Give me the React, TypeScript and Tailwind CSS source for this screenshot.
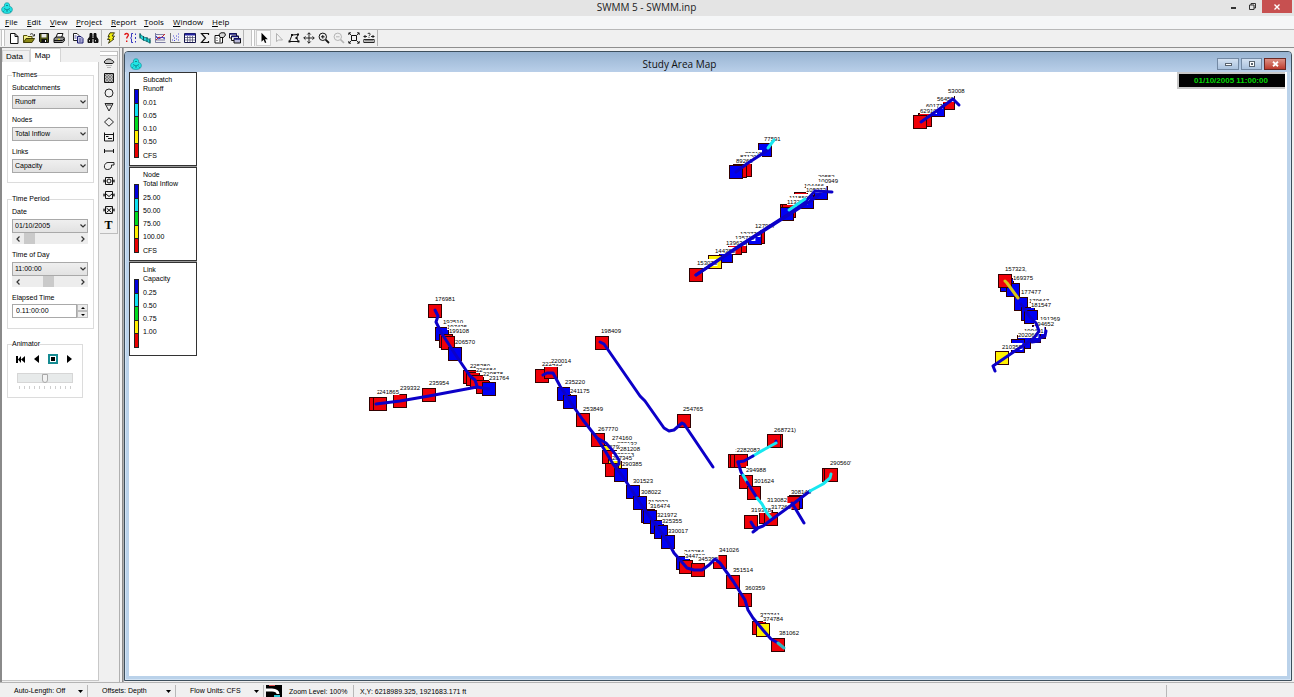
import { useState } from "react";
import type { ReactNode } from "react";
import clsx from "clsx";

const SANS = "font-['Liberation_Sans',Arial,sans-serif]";
const SEGOE = "font-['Open_Sans','Noto_Sans',sans-serif]";

const RED = "#f00008";
const BLUE = "#0000f4";
const YELLOW = "#fff000";
const CYAN = "#18e8f0";
const LINK = "#0c00c8";

/* ---------- icons ---------- */

function Icon({ children, size = 12 }: { children: ReactNode; size?: number }) {
  return (
    <svg width={size} height={size} viewBox="0 0 12 12" fill="none" stroke="#111" strokeWidth="1" className="shrink-0">
      {children}
    </svg>
  );
}

function AppIcon() {
  return (
    <Icon>
      <path d="M3.500 4.500C3 2 4 .8 6 .8S9 2 8.500 4.500C10.500 4.500 11.500 6 11.300 8C11 10.500 9 11.400 6 11.400S1 10.500.7 8C.5 6 1.500 4.500 3.500 4.500Z" fill="#20e4e4" stroke="#168f99" strokeWidth=".7" />
      <path d="M3 6.500 6 8 9 6.500M6 8v2M5 3.500h2" stroke="#0b7580" strokeWidth=".8" />
      <path d="M2 10 3.500 8.500M10 10 8.500 8.500" stroke="#0b7580" strokeWidth=".6" />
    </Icon>
  );
}

const fileTools = [
  {
    name: "New",
    icon: <path d="M2.500 1.500H7L10 4.500V11.500H2.500ZM7 1.500V4.500H10" fill="#fff" />,
  },
  {
    name: "Open",
    icon: (
      <>
        <path d="M.5 10.500V3.500H4L5 4.500H9V6" fill="#f5f08a" stroke="#54510a" />
        <path d="M.5 10.500 3 6.500H11.500L9 10.500Z" fill="#8b8816" stroke="#3d3b05" />
        <path d="M7 2.500C8.500 1 10 1.500 10.500 3.500M11.500 2v2H9.500" strokeWidth=".8" />
      </>
    ),
  },
  {
    name: "Save",
    icon: (
      <>
        <path d="M1.500 1.500H10.500V10.500H2.500L1.500 9.500Z" fill="#4d5312" />
        <path d="M3.500 2H8.500V5.500H3.500Z" fill="#e6e6e6" stroke="none" />
        <path d="M3.500 7H9V10.500H3.500Z" fill="#111" stroke="none" />
        <path d="M7 8h1v2H7z" fill="#eee" stroke="none" />
      </>
    ),
  },
  {
    name: "Print",
    icon: (
      <>
        <path d="M3 5.500 4.500 1.500H10L8.500 5.500" fill="#fff" />
        <path d="M1 6.500 3 5H10.500L11.300 6V9L9.500 10.500H1Z" fill="#8d8d8d" />
        <path d="M1 8.500H9.500L11 7" />
        <path d="M5 7.300h2" stroke="#e8e000" />
      </>
    ),
  },
];

const editTools = [
  {
    name: "Copy",
    icon: (
      <>
        <path d="M1.500 1.500H5L7 3.500V8.500H1.500Z" fill="#fff" stroke="#222" />
        <path d="M5.500 4.500H9L11 6.500V11H5.500Z" fill="#c8c8e8" stroke="#181870" />
        <path d="M2.500 4h2M2.500 6h2M7 7h2.500M7 9h2.500" stroke="#303080" strokeWidth=".9" />
      </>
    ),
  },
  {
    name: "Find",
    icon: (
      <>
        <path d="M3 1.500H5V5H3ZM7 1.500H9V5H7Z" fill="#111" />
        <path d="M1 10.500V7.500L3 4.500H5V10.500ZM7 10.500V4.500H9L11 7.500V10.500Z" fill="#111" />
        <path d="M5 6.500H7" />
        <path d="M2.500 8v1.500M8.500 8v1.500" stroke="#fff" strokeWidth=".8" />
      </>
    ),
  },
];

const runTools = [
  {
    name: "Run",
    icon: <path d="M5 .8H9.500L7 4H9.500L7.500 7H9L3.500 11.300 5 7.500H2.500L4.500 4.500H3Z" fill="#f2ee10" stroke="#33310a" strokeWidth=".9" />,
  },
];

const reportTools = [
  {
    name: "Query",
    icon: (
      <>
        <path d="M.8 3C1 .8 4.500 1 4.300 3.200C4.200 4.500 2.700 4.800 2.700 6.500M2.700 8.500V10" stroke="#e01818" strokeWidth="1.400" />
        <path d="M9 1.500H7.500V5L6.500 6 7.500 7V10.500H9M11.500 1.500V3M11.500 5V7M11.500 9V10.500" stroke="#2020b8" strokeWidth=".9" />
      </>
    ),
  },
  {
    name: "Profile Plot",
    icon: (
      <>
        <path d="M1 2 4.500 5 8 6 11 8V11L7 9 4 8 1 5.500Z" fill="#22d8d8" stroke="#0b7375" strokeWidth=".8" />
        <path d="M1 1V6.500M4.500 4V8.500M8 5V10M11 6V11.500" stroke="#0a4a55" strokeWidth=".9" />
      </>
    ),
  },
  {
    name: "Time Series Plot",
    icon: (
      <>
        <path d="M1.500 1V10.500H11.500M2 2.500H11M2 5.500H11M2 8H11" stroke="#4d4d83" strokeWidth=".7" />
        <path d="M2 8 5 5 7 6 11 2" stroke="#d02525" />
        <path d="M2 4 4.500 7 8 5 11 7" stroke="#3535d0" />
      </>
    ),
  },
  {
    name: "Scatter Plot",
    icon: (
      <>
        <path d="M1.500 1V10.500H11.500" stroke="#555" strokeWidth=".8" />
        <path d="M3 8h1M5 6h1M4 4h1M7 7h1M7 4h1M9 5h1M9 2h1M5 8.500h1M9 8h1" stroke="#4848d8" />
      </>
    ),
  },
  {
    name: "Table",
    icon: (
      <>
        <path d="M.5 1.500H11.500V10.500H.5Z" fill="#fff" stroke="#15154a" />
        <path d="M1 2.500H11" stroke="#2424a0" strokeWidth="2" />
        <path d="M1 5.500H11M1 8H11M3.500 4V10M6 4V10M8.500 4V10" stroke="#454567" strokeWidth=".7" />
      </>
    ),
  },
  {
    name: "Statistics",
    icon: <path d="M9.500 3V1.500H2.500L6.500 6 2.500 10.500H9.500V9" strokeWidth="1.200" />,
  },
  {
    name: "Properties",
    icon: (
      <>
        <path d="M1 3.500H8.500V11H1Z" fill="#fff" />
        <path d="M5 2.500 7 .8H10.500L11.500 3 9.500 5.500H6Z" fill="#d7d7d7" />
        <path d="M2.500 6h1M5 7h2M2.500 8.500h1M5 9h2" stroke="#222" />
      </>
    ),
  },
  {
    name: "Cascade Windows",
    icon: (
      <>
        <path d="M.5 1.500H7.500V6H.5Z" fill="#fff" />
        <path d="M.5 2H7.500" stroke="#15157a" strokeWidth="1.500" />
        <path d="M2.500 4H9.500V8.500H2.500Z" fill="#fff" />
        <path d="M2.500 4.500H9.500" stroke="#15157a" strokeWidth="1.500" />
        <path d="M5 6.500H11.500V11H5Z" fill="#b8b8d8" />
        <path d="M5 7H11.500" stroke="#15157a" strokeWidth="1.500" />
      </>
    ),
  },
];

const mapTools = [
  {
    name: "Select Object",
    icon: <path d="M3.500 .8V9.800L5.600 7.800 7 11 8.300 10.400 7 7.300H9.800Z" fill="#000" stroke="none" />,
  },
  {
    name: "Select Vertex",
    icon: <path d="M3.500 1.500V9.500L5.500 8H9.500Z" fill="#f4f4f4" stroke="#aaa" strokeWidth=".9" />,
  },
  {
    name: "Select Region",
    icon: (
      <>
        <path d="M4 3 10 2.500 8.500 6 10.500 9.500H1.500Z" />
        <path d="M3 2h2v2H3zM9 1.500h2v2H9zM7.500 5h2v2h-2zM.5 8.500h2v2h-2zM9.500 8.500h2v2h-2z" fill="#111" stroke="none" />
      </>
    ),
  },
  {
    name: "Pan",
    icon: <path d="M6 .8V11.200M.8 6H11.200M4.300 2.500 6 .8 7.700 2.500M4.300 9.500 6 11.200 7.700 9.500M2.500 4.300.8 6 2.500 7.700M9.500 4.300 11.200 6 9.500 7.700" strokeWidth=".9" />,
  },
  {
    name: "Zoom In",
    icon: (
      <>
        <circle cx="4.800" cy="4.800" r="3.700" />
        <path d="M3 4.800H6.600M4.800 3V6.600" />
        <path d="M7.600 7.600 11 11" strokeWidth="1.800" />
      </>
    ),
  },
  {
    name: "Zoom Out",
    icon: (
      <>
        <circle cx="4.800" cy="4.800" r="3.700" stroke="#b4b4b4" />
        <path d="M3 4.800H6.600" stroke="#b4b4b4" />
        <path d="M7.600 7.600 11 11" strokeWidth="1.600" stroke="#b4b4b4" />
      </>
    ),
  },
  {
    name: "Full Extent",
    icon: (
      <>
        <path d="M3.500 3.500H8.500V8.500H3.500Z" />
        <path d="M.8 3V.8H3M9 .8H11.200V3M11.200 9V11.200H9M3 11.200H.8V9M1 1 3.500 3.500M11 1 8.500 3.500M11 11 8.500 8.500M1 11 3.500 8.500" strokeWidth=".9" />
      </>
    ),
  },
  {
    name: "Measure",
    icon: (
      <>
        <path d="M.8 7.500H11.200V10.500H.8ZM3 8V9.500M5 8V9.500M7 8V9.500M9 8V9.500" strokeWidth=".9" />
        <path d="M.8 4.500H4M8 4.500H11.200M2.500 3 1 4.500 2.500 6M9.500 3 11 4.500 9.500 6M4.800 2C5 .8 7.200 .8 7.200 2.200C7.200 3.200 6 3 6 4.200M6 5.200V6" strokeWidth=".9" />
      </>
    ),
  },
];

const objectTools = [
  {
    name: "Rain Gage",
    icon: (
      <>
        <path d="M3 6.500C1 6.500 .8 4 2.500 3.500C3.500 1.500 8 1.500 9 3.500C11.500 4 11 6.500 9 6.500Z" fill="#c4c4c4" />
        <path d="M4 8v1M6 8v1M8 8v1M5 10v1M7 10v1" stroke="#555" strokeWidth=".8" />
      </>
    ),
  },
  {
    name: "Subcatchment",
    icon: (
      <>
        <path d="M1.500 1.500H10.500V10.500H1.500Z" fill="#b9b9b9" />
        <path d="M2 4 4 2M2 7 7 2M2 10 10 2M5 10 10 5M8 10 10 8M4 2 10 8M2 3 9 10M2 6 6 10M7 2 10 5" stroke="#555" strokeWidth=".5" />
      </>
    ),
  },
  { name: "Junction", icon: <circle cx="6" cy="6" r="4" strokeWidth=".9" /> },
  { name: "Outfall", icon: <path d="M2 2.500H10L6 10ZM3.500 4H8.500" strokeWidth=".9" /> },
  { name: "Divider", icon: <path d="M6 1.800 10.500 6 6 10.200 1.500 6Z" strokeWidth=".9" /> },
  { name: "Storage Unit", icon: <path d="M1.500 1.500V10H10.500V1.500M1.500 3.500H10.500M3 5.500H5.500M5 7.500H9" /> },
  { name: "Conduit", icon: <path d="M1.500 4V8M10.500 4V8M1.500 6H10.500" /> },
  { name: "Pump", icon: <path d="M11 2.500V5H8.500C9 8 7 9.500 4.500 9.500S1 8 1.500 5.500C2 3.500 3.500 2.500 5 2.500Z" strokeWidth=".9" /> },
  {
    name: "Orifice",
    icon: (
      <>
        <path d="M2.500 2.500H9.500V9.500H2.500ZM.5 6H2.500M9.500 6H11.500M1 4.500V7.500M11 4.500V7.500" />
        <circle cx="6" cy="6" r="2" />
      </>
    ),
  },
  { name: "Weir", icon: <path d="M2.500 2.500H9.500V9.500H2.500ZM.5 6H2.500M9.500 6H11.500M1 4.500V7.500M11 4.500V7.500M3 5 6 7.500 9 5" /> },
  { name: "Outlet", icon: <path d="M2.500 2.500H9.500V9.500H2.500ZM.5 6H2.500M9.500 6H11.500M1 4.500V7.500M11 4.500V7.500M3.500 4 8.500 8.500M8.500 4 3.500 8.500" /> },
];

/* ---------- map data ---------- */

type Square = [number, number, string];

const squares: Square[] = [
  [948, 103, RED],
  [938, 110, BLUE],
  [925, 120, RED],
  [920, 122, RED],
  [765, 150, BLUE],
  [745, 170, RED],
  [740, 171, RED],
  [736, 172, BLUE],
  [801, 199, RED],
  [821, 193, BLUE],
  [807, 202, BLUE],
  [787, 211, RED],
  [789, 211, RED],
  [787, 214, BLUE],
  [758, 237, RED],
  [755, 238, BLUE],
  [740, 246, RED],
  [735, 248, RED],
  [726, 256, BLUE],
  [715, 262, YELLOW],
  [696, 275, RED],
  [1007, 285, BLUE],
  [1013, 290, BLUE],
  [1005, 281, RED],
  [1021, 304, BLUE],
  [1028, 314, BLUE],
  [1031, 317, BLUE],
  [1039, 332, BLUE],
  [1034, 336, BLUE],
  [1024, 342, BLUE],
  [1018, 346, BLUE],
  [1002, 358, YELLOW],
  [435, 311, RED],
  [442, 334, BLUE],
  [446, 341, RED],
  [448, 343, RED],
  [455, 354, BLUE],
  [470, 377, RED],
  [473, 379, RED],
  [477, 382, RED],
  [483, 387, RED],
  [489, 389, BLUE],
  [376, 404, RED],
  [380, 404, RED],
  [400, 401, RED],
  [429, 395, RED],
  [602, 343, RED],
  [684, 421, RED],
  [542, 376, RED],
  [551, 372, RED],
  [564, 394, BLUE],
  [570, 402, BLUE],
  [583, 420, RED],
  [598, 440, RED],
  [610, 452, YELLOW],
  [609, 457, RED],
  [615, 466, YELLOW],
  [612, 470, RED],
  [621, 475, BLUE],
  [633, 492, BLUE],
  [640, 503, BLUE],
  [648, 516, BLUE],
  [650, 517, BLUE],
  [657, 527, BLUE],
  [661, 532, BLUE],
  [668, 542, BLUE],
  [683, 563, BLUE],
  [686, 567, RED],
  [698, 570, RED],
  [720, 562, RED],
  [733, 582, RED],
  [745, 600, RED],
  [759, 628, RED],
  [763, 630, YELLOW],
  [778, 645, RED],
  [776, 441, RED],
  [774, 441, RED],
  [735, 461, RED],
  [737, 461, RED],
  [741, 461, RED],
  [746, 482, RED],
  [754, 493, RED],
  [796, 502, BLUE],
  [793, 503, RED],
  [829, 475, RED],
  [831, 475, RED],
  [751, 522, RED],
  [766, 517, RED],
  [771, 519, RED],
];

// Label text, left edge, vertical centre. Later labels overlay earlier ones.
type Label = [string, number, number];

const labels: Label[] = [
  ["53008", 948, 91],
  ["60177", 926, 106],
  ["56450", 937, 99],
  ["62910", 920, 111],
  ["77591", 764, 139],
  ["85310", 745, 154],
  ["87120", 740, 157],
  ["89263", 736, 161],
  ["20552", 818, 177],
  ["100949", 818, 181],
  ["104466", 804, 186],
  ["105373", 806, 190],
  ["111850", 789, 198],
  ["113270", 787, 202],
  ["127907", 755, 226],
  ["132770", 740, 234],
  ["135717", 735, 238],
  ["139630", 726, 243],
  ["144385", 715, 251],
  ["153076", 697, 263],
  ["157323,", 1005, 269],
  ["169375", 1013, 278],
  ["177477", 1021, 292],
  ["179647", 1029, 301],
  ["181547", 1031, 305],
  ["191369", 1040, 319],
  ["194652", 1034, 324],
  ["199411", 1024, 331],
  ["202060", 1018, 335],
  ["210355", 1002, 347],
  ["176981", 435, 299],
  ["192510", 443, 322],
  ["197435", 447, 327],
  ["199108", 449, 331],
  ["206570", 455, 342],
  ["225380", 470, 366],
  ["226684", 476, 370],
  ["229878", 483, 374],
  ["231764", 489, 378],
  ["241865", 377, 392],
  ["241865", 379, 392],
  ["239332", 400, 388],
  ["235954", 429, 383],
  ["198409", 601, 331],
  ["254765", 683, 409],
  ["222435", 542, 364],
  ["220014", 551, 361],
  ["235220", 565, 382],
  ["241175", 570, 391],
  ["253849", 583, 409],
  ["267770", 598, 429],
  ["278132", 617, 444],
  ["274160", 612, 438],
  ["279281", 609, 447],
  ["281208", 620, 449],
  ["285068", 614, 455],
  ["287345", 612, 458],
  ["290385", 622, 464],
  ["301523", 633, 481],
  ["308022", 641, 492],
  ["313032", 648, 502],
  ["316474", 650, 506],
  ["321972", 657, 515],
  ["325355", 662, 521],
  ["330017", 668, 531],
  ["343284", 684, 552],
  ["344762", 685, 556],
  ["345393", 698, 559],
  ["341026", 719, 550],
  ["351514", 733, 570],
  ["360359", 745, 588],
  ["373741", 760, 615],
  ["374784", 763, 619],
  ["381062", 779, 633],
  ["268721)", 774, 430],
  [":2282083", 735, 450],
  ["294988", 746, 470],
  ["301624", 754, 481],
  ["308148", 791, 492],
  ["319378", 751, 510],
  ["317260", 771, 507],
  ["313082", 767, 500],
  ["290560'", 830, 463],
];

const links: [string, string][] = [
  ["921,122 938,110 953,99 959,105", LINK],
  ["736,172 748,163 768,150", LINK],
  ["768,148 774,140", CYAN],
  ["696,275 733,250 742,244 787,215 805,202 815,191 832,192", LINK],
  ["696,275 740,246 787,216 812,200 820,194", LINK],
  ["789,210 805,199", CYAN],
  ["1005,281 1007,283 1018,298", "#d8c818"],
  ["1021,304 1030,317 1036,323 1039,331 1034,338 1024,345 1018,349 993,366 995,371", LINK],
  ["1046,331 1045,336 1040,338 1039,341 1032,342", LINK],
  ["435,310 438,316 436,322 442,334 448,343 455,354 470,376 475,380 477,386", LINK],
  ["376,404 400,401 429,396 477,387 489,389", LINK],
  ["600,342 604,344 640,396 645,401 664,428 669,431 674,430 682,423 684,424 713,467", LINK],
  ["543,375 547,373 553,373 560,386 571,403 583,420 597,438 604,449 613,464 621,474 633,492 640,503 650,517 661,532 668,542 674,553 681,561 687,568 694,570 702,570 709,565 715,559 720,563 733,581 745,600 748,610 753,618 763,630 771,639 778,643", LINK],
  ["597,438 606,443 613,451 619,460 619,464 616,466", LINK],
  ["776,443 776,441", LINK],
  ["753,456 765,449 776,443", CYAN],
  ["738,462 744,461 753,456", LINK],
  ["738,462 741,472 745,479", LINK],
  ["743,475 747,482", CYAN],
  ["747,482 757,498", LINK],
  ["757,498 762,504 767,513 771,518", CYAN],
  ["751,522 754,527 757,529 753,532", LINK],
  ["755,529 763,526 771,520 793,504 810,491", LINK],
  ["792,503 804,523", LINK],
  ["810,491 823,484 830,478 831,474", CYAN],
  ["778,643 784,648", "#30b8c0"],
];

function StudyMap() {
  return (
    <svg viewBox="129 72 1158 604" className="block h-full w-full" role="img" aria-label="Study Area Map">
      {squares.map(([x, y, fill], i) => (
        <rect key={i} x={x - 6.5} y={y - 6.5} width="13" height="13" fill={fill} stroke="#300" strokeWidth="1" />
      ))}
      {labels.map(([text, x, y], i) => (
        <g key={i}>
          <rect x={x} y={y - 4} width={text.length * 3.4} height="7" fill="#fff" />
          <text x={x} y={y + 2} className={clsx("text-[6px]", SANS)} fill="#000">
            {text}
          </text>
        </g>
      ))}
      {links.map(([points, color], i) => (
        <polyline key={i} points={points} fill="none" stroke={color} strokeWidth="3" strokeLinejoin="round" strokeLinecap="round" />
      ))}
    </svg>
  );
}

/* ---------- chrome ---------- */

function Grip() {
  return <div className="mx-px h-4 w-1 border-x border-[#c4c4c4] bg-white" />;
}

function ToolGroup({ tools, active }: { tools: { name: string; icon: ReactNode }[]; active?: string }) {
  return (
    <div className="flex">
      {tools.map((t) => (
        <button
          key={t.name}
          type="button"
          aria-label={t.name}
          className={clsx(
            "flex h-[16px] w-[15px] items-center justify-center",
            active === t.name && "border border-[#d0d0d0] bg-[#fafafa]"
          )}
        >
          <Icon>{t.icon}</Icon>
        </button>
      ))}
    </div>
  );
}

function Divider() {
  return <div className="mx-px h-[16px] w-px bg-[#b4b4b4]" />;
}

function SelectField({ label, value }: { label: string; value: string }) {
  return (
    <label className="flex flex-col gap-[2px]">
      <span className="leading-[10px]">{label}</span>
      <span className="relative block">
        <select className="block h-[14px] w-full appearance-none border border-[#a9a9a9] bg-gradient-to-b from-[#efefef] to-[#e2e2e2] pl-[2px] leading-[12px] outline-none">
          <option>{value}</option>
        </select>
        <svg width="6" height="4" viewBox="0 0 6 4" className="pointer-events-none absolute top-[5px] right-[2px]" fill="none" stroke="#333" strokeWidth="1.200">
          <path d="M.5 .5 3 3 5.500 .5" />
        </svg>
      </span>
    </label>
  );
}

function ScrollBar({ label, thumb }: { label: string; thumb: string }) {
  return (
    <div className="flex h-[11px] items-stretch bg-[#ededed]">
      <button type="button" aria-label={`${label} back`} className="flex w-[11px] items-center justify-center">
        <svg width="4" height="6" viewBox="0 0 4 6" fill="none" stroke="#333" strokeWidth="1.200"><path d="M3.500 .5 1 3 3.500 5.500" /></svg>
      </button>
      <div className="flex-1">
        <div className={clsx("h-full w-[11px] bg-[#cacaca]", thumb)} />
      </div>
      <button type="button" aria-label={`${label} forward`} className="flex w-[11px] items-center justify-center">
        <svg width="4" height="6" viewBox="0 0 4 6" fill="none" stroke="#333" strokeWidth="1.200"><path d="M.5 .5 3 3 .5 5.500" /></svg>
      </button>
    </div>
  );
}

function Sidebar() {
  const [speed, setSpeed] = useState(50);

  return (
    <aside className="flex w-[99px] shrink-0 flex-col border-l-2 border-[#8a8a8a] bg-[#f0f0f0] pb-px text-[7px] text-black">
      <div role="tablist" className="flex h-[14px] items-end text-[8px]">
        <button type="button" role="tab" aria-selected="false" className="h-[12px] w-[28px] border border-b-0 border-[#d5d5d5] pr-[3px] leading-[12px]">
          Data
        </button>
        <button type="button" role="tab" aria-selected="true" className="h-[14px] w-[31px] border border-b-0 border-[#d5d5d5] bg-white pr-[6px] leading-[13px]">
          Map
        </button>
      </div>

      <div className="flex-1 border-r border-b border-[#c8c8c8] bg-white pt-[8px] pr-[4px] pl-[5px]">
        <fieldset className="border border-[#dcdcdc] pr-[5px] pb-[9px] pl-[4px]">
          <legend className="leading-[10px]">Themes</legend>
          <div className="flex flex-col gap-[6px] pt-[3px]">
            <SelectField label="Subcatchments" value="Runoff" />
            <SelectField label="Nodes" value="Total Inflow" />
            <SelectField label="Links" value="Capacity" />
          </div>
        </fieldset>

        <fieldset className="mt-[11px] border border-[#dcdcdc] pr-[5px] pb-[10px] pl-[4px]">
          <legend className="leading-[10px]">Time Period</legend>
          <div className="flex flex-col gap-[6px] pt-[3px]">
            <div>
              <SelectField label="Date" value="01/10/2005" />
              <ScrollBar label="Date" thumb="ml-px" />
            </div>
            <div>
              <SelectField label="Time of Day" value="11:00:00" />
              <ScrollBar label="Time of day" thumb="ml-[20px]" />
            </div>
            <div>
              <label htmlFor="elapsed" className="block pb-px leading-[10px]">Elapsed Time</label>
              <div className="flex h-[14px]">
                <input id="elapsed" defaultValue="0.11:00:00" className="w-0 flex-1 border border-[#a9a9a9] bg-white pl-[3px] outline-none" />
                <div className="flex w-[11px] flex-col">
                  <button type="button" aria-label="Increase" className="flex flex-1 items-center justify-center border border-[#bdbdbd] bg-[#ececec]">
                    <svg width="4" height="2" viewBox="0 0 4 2"><path d="M0 2 2 0 4 2Z" /></svg>
                  </button>
                  <button type="button" aria-label="Decrease" className="flex flex-1 items-center justify-center border border-[#bdbdbd] bg-[#ececec]">
                    <svg width="4" height="2" viewBox="0 0 4 2"><path d="M0 0 2 2 4 0Z" /></svg>
                  </button>
                </div>
              </div>
            </div>
          </div>
        </fieldset>

        <fieldset className="mt-[10px] w-[76px] border border-[#dcdcdc] px-[4px] pb-[8px]">
          <legend className="leading-[10px]">Animator</legend>
          <div className="flex h-[20px] items-center justify-between pr-[6px] pl-[4px]">
            <button type="button" aria-label="Rewind"><svg width="9" height="7" viewBox="0 0 9 7"><path d="M0 0H2V7H0ZM5 0V7L2 3.500ZM9 0V7L5 3.500Z" /></svg></button>
            <button type="button" aria-label="Play backward"><svg width="5" height="8" viewBox="0 0 5 8"><path d="M5 0V8L0 4Z" /></svg></button>
            <button type="button" aria-label="Stop" className="flex size-[10px] items-center justify-center border-2 border-[#168b92] bg-white">
              <span className="size-1 bg-black" />
            </button>
            <button type="button" aria-label="Play forward"><svg width="5" height="8" viewBox="0 0 5 8"><path d="M0 0V8L5 4Z" /></svg></button>
          </div>
          <input
            type="range"
            aria-label="Animation speed"
            value={speed}
            onChange={(e) => setSpeed(Number(e.target.value))}
            className="mx-auto mt-[4px] block h-[10px] w-[56px] appearance-none border border-[#d6d6d6] bg-[#e7eaea] [&::-webkit-slider-thumb]:h-[9px] [&::-webkit-slider-thumb]:w-[6px] [&::-webkit-slider-thumb]:appearance-none [&::-webkit-slider-thumb]:rounded-b-full [&::-webkit-slider-thumb]:border [&::-webkit-slider-thumb]:border-[#a8a8a8] [&::-webkit-slider-thumb]:bg-[#f2f2f2]"
          />
          <div className="mx-auto mt-[3px] flex w-[52px] justify-between">
            {Array.from({ length: 11 }, (_, i) => (
              <span key={i} className="h-[3px] w-px bg-[#cfcfcf]" />
            ))}
          </div>
        </fieldset>
      </div>
    </aside>
  );
}

function ObjectToolbar() {
  return (
    <div className="w-[20px] shrink-0 bg-[#f0f0f0] px-px pt-[3px]">
      <div className="flex h-[183px] flex-col border-r border-b border-[#bdbdbd] pb-px">
        <div className="h-[5px] border-y border-[#c4c4c4] bg-white" />
        {objectTools.map((t) => (
          <button key={t.name} type="button" aria-label={t.name} className="flex min-h-0 flex-1 items-center justify-center">
            <Icon>{t.icon}</Icon>
          </button>
        ))}
        <button type="button" aria-label="Label" className="flex min-h-0 flex-1 items-center justify-center font-['Liberation_Serif',serif] text-[12px] leading-none font-bold">
          T
        </button>
      </div>
    </div>
  );
}

const legendColors = ["bg-[#0000dc]", "bg-[#10e0f0]", "bg-[#00dc20]", "bg-[#fff000]", "bg-[#e80000]"];

function Legend({ title, theme, values, unit }: { title: string; theme: string; values: string[]; unit?: string }) {
  return (
    <section className="h-[94px] border border-[#333] bg-white pt-[2px] pl-[4px] text-[7px] text-black">
      <div className="pl-[9px] leading-[9px]">
        <p>{title}</p>
        <p>{theme}</p>
      </div>
      <div className="flex -mt-[4px] gap-[4px]">
        <div className="flex h-[69px] w-[5px] flex-col border border-[#222]">
          {legendColors.map((c) => (
            <div key={c} className={clsx("flex-1 border-b border-[#222] last:border-b-0", c)} />
          ))}
        </div>
        <div className="pt-[7px] leading-[14px]">
          {values.map((v) => (
            <p key={v} className="h-[13px]">{v}</p>
          ))}
          {unit && <p className="leading-[16px]">{unit}</p>}
        </div>
      </div>
    </section>
  );
}

function MapWindow() {
  return (
    <section className="mt-[3px] mr-[2px] mb-px flex flex-1 flex-col overflow-hidden rounded-t-[4px] border border-[#3d4f5c] bg-[#bad2ea] px-[4px] pb-[4px] shadow-[inset_0_0_0_1px_#d4e4f4]">
      <header className="-mx-[4px] flex h-[20px] shrink-0 items-center bg-gradient-to-b from-[#98b4d2] to-[#b9cfe9] pt-[4px] pr-[5px] pl-[5px]">
        <AppIcon />
        <h1 className={clsx("flex-1 text-center text-[10px] leading-[14px] text-[#111]", SEGOE)}>Study Area Map</h1>
        <div className="flex gap-[2px]">
          <button type="button" aria-label="Minimize map" className="flex h-[12px] w-[22px] items-center justify-center border border-[#7389a3] bg-gradient-to-b from-[#d3e1f1] to-[#a9c1dd]">
            <span className="h-[3px] w-[7px] border border-[#59636e] bg-white" />
          </button>
          <button type="button" aria-label="Maximize map" className="flex h-[12px] w-[21px] items-center justify-center border border-[#7389a3] bg-gradient-to-b from-[#d3e1f1] to-[#a9c1dd]">
            <span className="size-[6px] border border-[#59636e] bg-white p-px"><span className="block size-[2px] bg-[#59636e]" /></span>
          </button>
          <button type="button" aria-label="Close map" className="flex h-[12px] w-[22px] items-center justify-center border border-[#6b2a26] bg-gradient-to-b from-[#dc9084] to-[#bd3a2d]">
            <svg width="7" height="6" viewBox="0 0 7 6" stroke="#fff" strokeWidth="1.800"><path d="M1 .8 6 5.200M6 .8 1 5.200" /></svg>
          </button>
        </div>
      </header>

      <div className="relative min-h-0 flex-1 bg-white">
        <StudyMap />
        <div className="absolute top-0 left-0 flex w-[68px] flex-col gap-px bg-[#999]">
          <Legend title="Subcatch" theme="Runoff" values={["0.01", "0.05", "0.10", "0.50"]} unit="CFS" />
          <Legend title="Node" theme="Total Inflow" values={["25.00", "50.00", "75.00", "100.00"]} unit="CFS" />
          <Legend title="Link" theme="Capacity" values={["0.25", "0.50", "0.75", "1.00"]} />
        </div>
        <time className="absolute top-0 right-[2px] h-[17px] w-[108px] border-2 border-r-0 border-[#c8c8c8] bg-black pr-[2px] text-center text-[8px] leading-[14px] font-bold text-[#00d800]">
          01/10/2005 11:00:00
        </time>
      </div>
    </section>
  );
}

const menus = [
  ["File", "w-[22px]"],
  ["Edit", "w-[23px]"],
  ["View", "w-[26px]"],
  ["Project", "w-[35px]"],
  ["Report", "w-[33px]"],
  ["Tools", "w-[29px]"],
  ["Window", "w-[39px]"],
  ["Help", "w-[25px]"],
];

function StatusMenu({ text }: { text: string }) {
  return (
    <button type="button" className="flex w-[88px] items-center justify-between border-r border-[#b8b8b8] pr-[4px] pl-[14px]">
      {text}
      <svg width="5" height="3" viewBox="0 0 5 3"><path d="M0 0H5L2.500 3Z" /></svg>
    </button>
  );
}

export default function App() {
  return (
    <div className={clsx("flex h-screen flex-col overflow-hidden bg-[#f0f0f0] text-black", SANS)}>
      <header className="flex h-[16px] shrink-0 bg-[#e4e4e4]">
        <div className="flex flex-1 items-center pl-px">
          <AppIcon />
        </div>
        <p className={clsx("text-[10px] leading-[15px] text-[#222]", SEGOE)}>SWMM 5 - SWMM.inp</p>
        <div className="flex flex-1 items-start justify-end pr-[2px]">
          <button type="button" aria-label="Minimize" className="flex h-[13px] w-[18px] items-center justify-center pt-[3px]">
            <span className="h-[2px] w-[5px] bg-[#333]" />
          </button>
          <button type="button" aria-label="Restore" className="flex h-[13px] w-[20px] items-center justify-center">
            <svg width="7" height="7" viewBox="0 0 7 7" fill="none" stroke="#333"><path d="M.5 2H5V6.500H.5ZM2 2V.5H6.500V5H5" /></svg>
          </button>
          <button type="button" aria-label="Close" className="flex h-[13px] w-[30px] items-center justify-center bg-[#c75050]">
            <svg width="6" height="6" viewBox="0 0 6 6" stroke="#fff" strokeWidth="1.400"><path d="M.5 .5 5.500 5.500M5.500 .5 .5 5.500" /></svg>
          </button>
        </div>
      </header>

      <nav className={clsx("flex h-[13px] shrink-0 items-start bg-[#f5f6f7] pl-[5px] text-[8px] leading-[11px]", SEGOE)}>
        {menus.map(([m, width]) => (
          <button key={m} type="button" className={clsx("text-left whitespace-nowrap", width)}>
            <span className="underline">{m[0]}</span>
            {m.slice(1)}
          </button>
        ))}
      </nav>

      <div className="flex h-[19px] shrink-0 items-start border-t border-b border-t-[#b8b8b8] border-b-[#8e8e8e]">
        <Grip />
        <ToolGroup tools={fileTools} />
        <div className="w-px" />
        <Divider />
        <ToolGroup tools={editTools} />
        <Divider />
        <ToolGroup tools={runTools} />
        <Divider />
        <div className="w-px" />
        <ToolGroup tools={reportTools} />
        <Divider />
        <div className="w-[5px]" />
        <Grip />
        <ToolGroup tools={mapTools} active="Select Object" />
        <Divider />
      </div>

      <main className="flex min-h-0 flex-1">
        <Sidebar />
        <ObjectToolbar />
        <div className="flex w-[5px] shrink-0 justify-between border-x border-[#b0b0b0] bg-[#f0f0f0]">
          <div className="ml-auto w-px bg-[#8a8a8a]" />
        </div>
        <MapWindow />
      </main>

      <footer className="flex h-[15px] shrink-0 border-t border-[#b4b4b4] pt-[2px] text-[7px]">
        <StatusMenu text="Auto-Length: Off" />
        <StatusMenu text="Offsets: Depth" />
        <StatusMenu text="Flow Units: CFS" />
        <svg width="16" height="12" viewBox="0 0 16 12" className="ml-[2px] shrink-0" aria-hidden="true">
          <rect width="16" height="12" />
          <path d="M0 5H6C10 5 12 7 12 9" fill="none" stroke="#fff" strokeWidth="3" />
          <path d="M3 .5h6" stroke="#e05050" />
          <path d="M8 12V10h6v2Z" fill="#30c8d8" />
        </svg>
        <p className="w-[72px] border-r border-[#b8b8b8] pl-[7px] leading-[13px] whitespace-nowrap">Zoom Level: 100%</p>
        <p className="flex-1 pl-[6px] leading-[13px]">X,Y: 6218989.325, 1921683.171 ft</p>
        <div className="w-[128px] border-l border-[#b8b8b8]" />
      </footer>
    </div>
  );
}
